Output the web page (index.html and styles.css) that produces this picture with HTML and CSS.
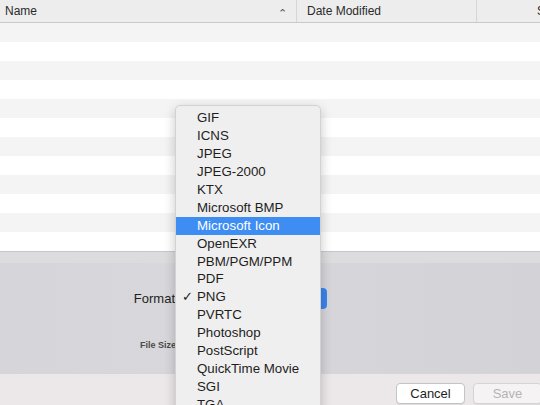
FILE: index.html
```html
<!DOCTYPE html>
<html>
<head>
<meta charset="utf-8">
<link rel="stylesheet" href="styles.css">
</head>
<body>
<div class="window">
  <div class="header">
    <div class="col col-name"><span>Name</span><span class="sort">&#x2303;</span></div>
    <div class="col col-date"><span>Date Modified</span></div>
    <div class="col col-size"><span>Size</span></div>
  </div>
  <div class="rows">
    <div class="row odd"></div><div class="row"></div>
    <div class="row odd"></div><div class="row"></div>
    <div class="row odd"></div><div class="row"></div>
    <div class="row odd"></div><div class="row"></div>
    <div class="row odd"></div><div class="row"></div>
    <div class="row odd"></div><div class="row"></div>
  </div>
  <div class="panel">
    <div class="band"></div>
    <div class="options">
      <div class="opt-row format-row">
        <div class="label">Format</div>
        <div class="popup"><span class="popup-end"></span></div>
      </div>
      <div class="opt-row size-row">
        <div class="label small">File Size</div>
      </div>
    </div>
    <div class="footer">
      <button class="btn">Cancel</button>
      <button class="btn disabled">Save</button>
    </div>
  </div>
  <div class="menu">
    <div class="item">GIF</div>
    <div class="item">ICNS</div>
    <div class="item">JPEG</div>
    <div class="item">JPEG-2000</div>
    <div class="item">KTX</div>
    <div class="item">Microsoft BMP</div>
    <div class="item selected">Microsoft Icon</div>
    <div class="item">OpenEXR</div>
    <div class="item">PBM/PGM/PPM</div>
    <div class="item">PDF</div>
    <div class="item checked"><span class="check">&#x2713;</span>PNG</div>
    <div class="item">PVRTC</div>
    <div class="item">Photoshop</div>
    <div class="item">PostScript</div>
    <div class="item">QuickTime Movie</div>
    <div class="item">SGI</div>
    <div class="item">TGA</div>
  </div>
</div>
</body>
</html>
```

FILE: styles.css
```css
* { box-sizing: border-box; }
html, body { margin: 0; padding: 0; }
body {
  width: 540px;
  height: 405px;
  overflow: hidden;
  font-family: "Liberation Sans", Arial, sans-serif;
  color: #222;
}
.window {
  position: relative;
  width: 540px;
  height: 405px;
  display: flex;
  flex-direction: column;
  background: #fff;
  overflow: hidden;
}
.header {
  display: flex;
  height: 23px;
  background: #ededed;
  border-bottom: 1px solid #c9c9c9;
  font-size: 12px;
  color: #2a2a2a;
  flex: none;
  white-space: nowrap;
}
.col {
  display: flex;
  align-items: center;
  height: 22px;
}
.col-name {
  width: 297px;
  flex: none;
  padding-left: 5px;
  padding-right: 9px;
  justify-content: space-between;
  border-right: 1px solid #d6d6d6;
}
.sort {
  font-size: 11px;
  color: #555;
  padding-top: 5px;
}
.col-date {
  width: 180px;
  flex: none;
  padding-left: 10px;
  border-right: 1px solid #d6d6d6;
}
.col-size {
  flex: none;
  width: 100px;
  padding-left: 60px;
}
.rows { flex: none; }
.row { height: 19px; background: #fff; }
.row.odd { background: #f4f4f4; }
.panel {
  flex: 1;
  display: flex;
  flex-direction: column;
  background: linear-gradient(180deg, #d4d4d9 0%, #d3d3d8 60%, #dedadd 100%);
  border-top: 1px solid #c6c6c9;
}
.band {
  height: 11px;
  background: #dcdcdf;
  flex: none;
}
.options {
  flex: 1;
  display: flex;
  flex-direction: column;
  padding-top: 24px;
  background: linear-gradient(90deg, #d5d5da 0%, #d8d8dc 35%, #d2d2d7 100%);
}
.opt-row {
  display: flex;
  align-items: center;
}
.format-row { height: 22px; }
.label {
  width: 175px;
  text-align: right;
  font-size: 13px;
  color: #1e1e1e;
}
.label.small {
  width: 176px;
  font-size: 9px;
  font-weight: bold;
  color: #4a4a4a;
}
.size-row { height: 14px; margin-top: 29px; }
.popup {
  margin-left: 8px;
  width: 144px;
  height: 21px;
  background: #fff;
  border-radius: 4px;
  display: flex;
  justify-content: flex-end;
}
.popup-end {
  width: 17px;
  height: 21px;
  background: #3a85ef;
  border-radius: 0 4px 4px 0;
}
.footer {
  height: 32px;
  flex: none;
  background: #ece7e8;
  border-top: 1px solid #d9d5d6;
  display: flex;
  justify-content: flex-end;
  align-items: flex-start;
  gap: 8px;
  padding-top: 9px;
  margin-right: -2px;
}
.btn {
  font-family: inherit;
  font-size: 13px;
  height: 21px;
  width: 69px;
  padding: 0;
  background: #fff;
  border: 1px solid #c4c4c4;
  border-radius: 4px;
  color: #1e1e1e;
  box-shadow: 0 1px 0 rgba(0,0,0,0.05);
}
.btn.disabled {
  color: #b4b4b4;
  background: #f5f3f4;
  border-color: #d6d3d4;
}
.menu {
  position: absolute;
  left: 175px;
  top: 105px;
  width: 146px;
  height: 320px;
  background: #efefef;
  border: 1px solid #d2d2d2;
  border-radius: 5px;
  box-shadow: 0 4px 12px rgba(0,0,0,0.22);
  padding-top: 3px;
  font-size: 13.3px;
  color: #1d1d1d;
  overflow: hidden;
}
.item {
  height: 17.95px;
  line-height: 18px;
  padding-left: 21px;
  position: relative;
  white-space: nowrap;
}
.item.selected {
  background: #3e8df2;
  color: #fff;
}
.check {
  position: absolute;
  left: 6px;
  top: 0;
  font-size: 13px;
}
```
